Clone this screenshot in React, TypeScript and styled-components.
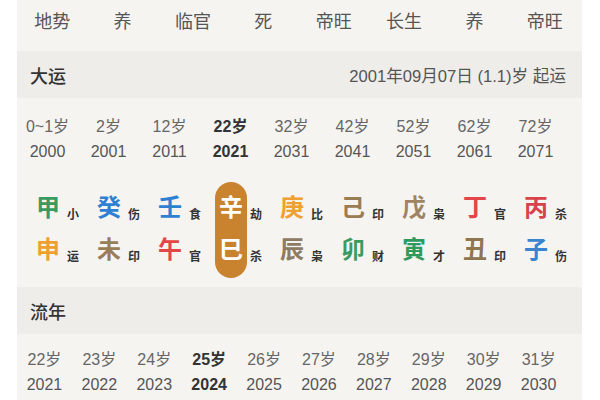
import styled, { createGlobalStyle } from 'styled-components';

const GlobalStyle = createGlobalStyle`
  html, body {
    margin: 0;
    padding: 0;
    background: #fff;
  }
  body {
    font-family: "Liberation Sans", "Noto Sans CJK SC", sans-serif;
  }
`;

const Panel = styled.div`
  width: 565px;
  margin-left: 17px;
  background: #f5f4f1;
`;

const StageRow = styled.div`
  display: grid;
  grid-template-columns: repeat(8, minmax(0, 1fr));
  height: 51px;
  padding: 0 2px 7px 0;
  box-sizing: border-box;
`;

const StageCell = styled.div`
  text-align: center;
  line-height: 44px;
  font-size: 18px;
  color: #555;
`;

const SectionHeader = styled.div`
  height: 47px;
  display: flex;
  align-items: center;
  justify-content: space-between;
  padding: 0 16px 0 13px;
  background: #efede9;
`;

const SectionTitle = styled.div`
  font-size: 18px;
  font-weight: 500;
  color: #333;
`;

const SectionNote = styled.div`
  font-size: 16.6px;
  color: #555;
`;

const YearGrid = styled.div<{ $cols: number; $pad: number }>`
  display: grid;
  grid-template-columns: repeat(${p => p.$cols}, minmax(0, 1fr));
  padding: ${p => p.$pad}px 16px ${p => p.$pad}px 0;
`;

const YearCell = styled.div<{ $active?: boolean }>`
  display: flex;
  flex-direction: column;
  align-items: center;
  font-size: 16px;
  line-height: 25px;
  color: ${p => (p.$active ? '#333' : '#666')};
  font-weight: ${p => (p.$active ? 700 : 400)};
`;

const Year = styled.span<{ $active?: boolean }>`
  color: ${p => (p.$active ? '#333' : '#555')};
`;

const PillarGrid = styled.div`
  display: grid;
  grid-template-columns: repeat(9, minmax(0, 1fr));
  padding: 2px 16px 9px 0;
`;

const PillarCell = styled.div`
  display: flex;
  justify-content: center;
  padding-left: 17px;
`;

const CharStack = styled.div<{ $active?: boolean }>`
  display: flex;
  flex-direction: column;
  align-items: center;
  flex: none;
  width: 32px;
  padding: 5px 0 3px;
  border-radius: 16px;
  background: ${p => (p.$active ? '#c9832f' : 'transparent')};
`;

const BigChar = styled.span<{ $color: string }>`
  font-size: 24px;
  line-height: 42px;
  font-weight: 700;
  color: ${p => p.$color};
`;

const LabelStack = styled.div`
  display: flex;
  flex-direction: column;
  flex: none;
  padding-top: 12px;
  margin-left: 3px;
  width: 13px;
`;

const Label = styled.span`
  font-size: 12px;
  line-height: 42px;
  font-weight: 700;
  color: #333;
`;

const WOOD = '#3a9a5f';
const WATER = '#2f7fd3';
const METAL = '#eea033';
const EARTH = '#9a7c55';
const FIRE = '#e2464a';

const stages = ['地势', '养', '临官', '死', '帝旺', '长生', '养', '帝旺'];

const dayun = [
  ['0~1岁', '2000'], ['2岁', '2001'], ['12岁', '2011'], ['22岁', '2021'], ['32岁', '2031'],
  ['42岁', '2041'], ['52岁', '2051'], ['62岁', '2061'], ['72岁', '2071'],
];

const pillars = [
  { top: '甲', tc: WOOD, tl: '小', bot: '申', bc: METAL, bl: '运' },
  { top: '癸', tc: WATER, tl: '伤', bot: '未', bc: EARTH, bl: '印' },
  { top: '壬', tc: WATER, tl: '食', bot: '午', bc: FIRE, bl: '官' },
  { top: '辛', tc: '#fff', tl: '劫', bot: '巳', bc: '#fff', bl: '杀', active: true },
  { top: '庚', tc: METAL, tl: '比', bot: '辰', bc: '#8d7b66', bl: '枭' },
  { top: '己', tc: EARTH, tl: '印', bot: '卯', bc: WOOD, bl: '财' },
  { top: '戊', tc: '#a08462', tl: '枭', bot: '寅', bc: '#2f9a5e', bl: '才' },
  { top: '丁', tc: FIRE, tl: '官', bot: '丑', bc: '#8d7650', bl: '印' },
  { top: '丙', tc: '#d8424b', tl: '杀', bot: '子', bc: '#3a84d0', bl: '伤' },
];

const liunian = Array.from({ length: 10 }, (_, i) => [`${22 + i}岁`, `${2021 + i}`]);

export default function App() {
  return (
    <>
      <GlobalStyle />
      <Panel>
        <StageRow>
          {stages.map((s, i) => <StageCell key={i}>{s}</StageCell>)}
        </StageRow>

        <SectionHeader>
          <SectionTitle>大运</SectionTitle>
          <SectionNote>2001年09月07日 (1.1)岁 起运</SectionNote>
        </SectionHeader>

        <YearGrid $cols={9} $pad={16}>
          {dayun.map(([age, year], i) => (
            <YearCell key={year} $active={i === 3}>
              <span>{age}</span>
              <Year $active={i === 3}>{year}</Year>
            </YearCell>
          ))}
        </YearGrid>

        <PillarGrid>
          {pillars.map((p, i) => (
            <PillarCell key={i}>
              <CharStack $active={p.active}>
                <BigChar $color={p.tc}>{p.top}</BigChar>
                <BigChar $color={p.bc}>{p.bot}</BigChar>
              </CharStack>
              <LabelStack>
                <Label>{p.tl}</Label>
                <Label>{p.bl}</Label>
              </LabelStack>
            </PillarCell>
          ))}
        </PillarGrid>

        <SectionHeader>
          <SectionTitle>流年</SectionTitle>
        </SectionHeader>

        <YearGrid $cols={10} $pad={13}>
          {liunian.map(([age, year], i) => (
            <YearCell key={year} $active={i === 3}>
              <span>{age}</span>
              <Year $active={i === 3}>{year}</Year>
            </YearCell>
          ))}
        </YearGrid>
      </Panel>
    </>
  );
}
